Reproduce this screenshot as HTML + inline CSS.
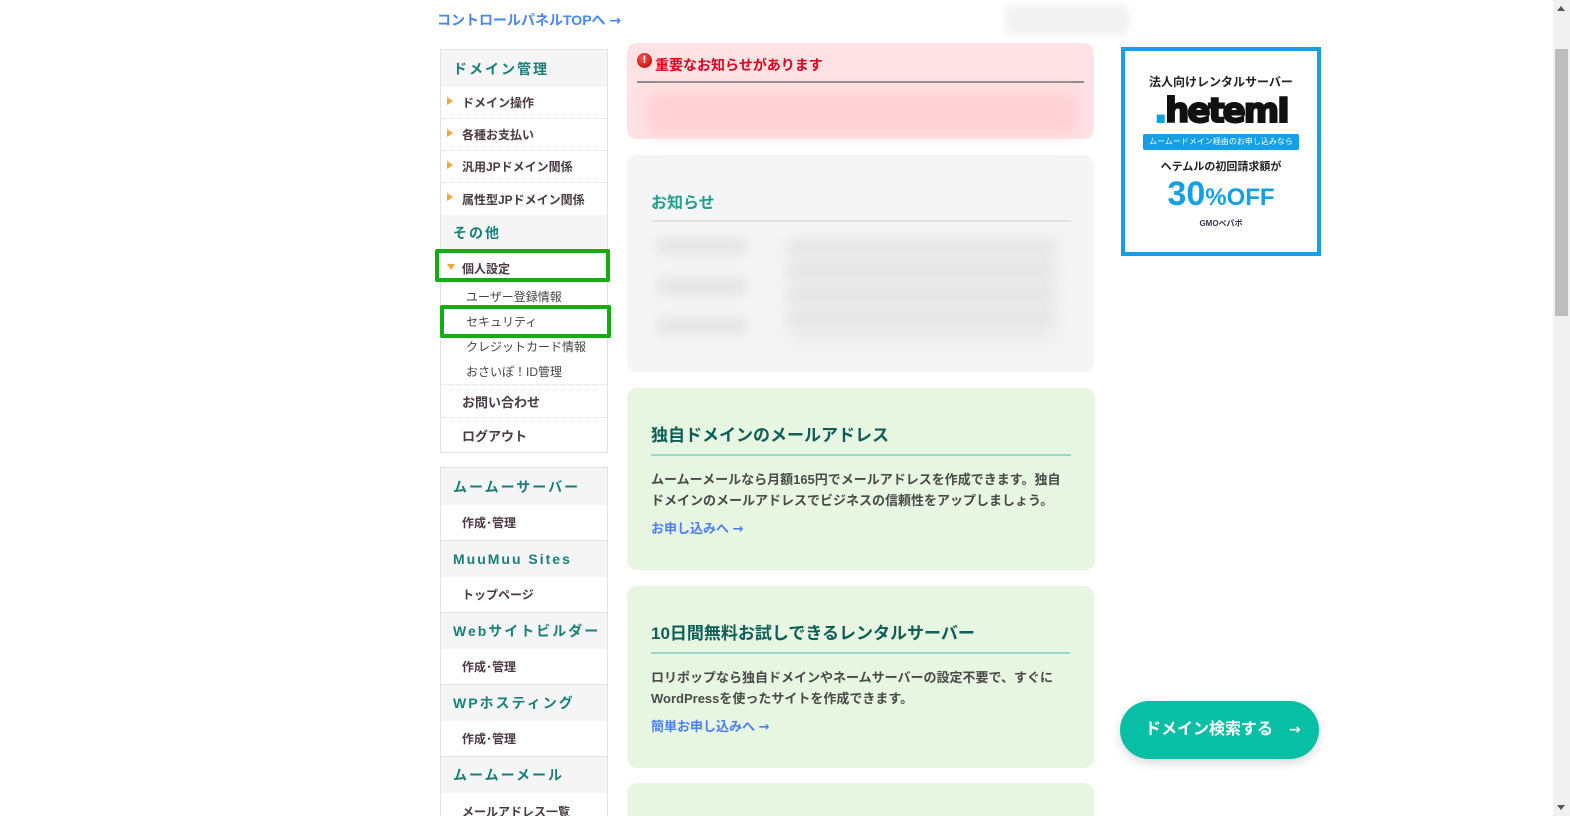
<!DOCTYPE html>
<html style="width:1570px;height:816px;overflow:hidden"><head><meta charset="utf-8"><style>
*{margin:0;padding:0;box-sizing:border-box}
body{width:1570px;height:816px;overflow:hidden;background:#fff;font-family:"Liberation Sans","Noto Sans CJK JP",sans-serif;position:relative;color:#444}
.a{position:absolute}
.side{left:440px;width:168px;border:1px solid #e3e3e3;border-top:1px solid #e3e3e3}
.hd{position:absolute;left:0;width:166px;background:#f5f5f5;color:#17807a;font-size:14px;font-weight:bold;letter-spacing:2px;padding-left:12px;display:flex;align-items:center}
.it{position:absolute;left:0;width:166px;font-size:12px;color:#4a3a44;font-weight:bold;padding-left:21px;display:flex;align-items:center;border-bottom:1px dotted #ddd}
.it.t:before{content:"";position:absolute;left:6px;top:50%;margin-top:-6px;border-left:6px solid #f5a33a;border-top:4px solid transparent;border-bottom:4px solid transparent}
.sub{position:absolute;left:25px;font-size:12px;color:#444}
.box{position:absolute;border-radius:10px}
.gh{position:absolute;left:24px;right:24px;font-size:17px;font-weight:bold;color:#0d5e58;border-bottom:2px solid #9dd6cf;padding-bottom:8px}
.gp{position:absolute;left:24px;right:24px;font-size:13px;line-height:21px;color:#4a4a4a;font-weight:bold}
.gl{position:absolute;left:24px;font-size:13px;color:#4b7ff5;font-weight:bold}
.grn{position:absolute;border:4px solid #12ad12;border-radius:2px}
.ar{font-family:"DejaVu Sans",sans-serif;font-weight:bold}
</style></head><body>
<div class="a" style="left:437px;top:10px;font-size:14px;color:#4a86f0;font-weight:bold">コントロールパネルTOPへ <span class="ar">→</span></div>
<div class="a" style="left:1005px;top:5px;width:125px;height:30px;background:#f2f2f2;filter:blur(4px);border-radius:8px"></div>

<div class="a side" style="top:49px;height:404px">
<div class="hd" style="top:0;height:37px">ドメイン管理</div>
<div class="it t" style="top:37px;height:32px">ドメイン操作</div>
<div class="it t" style="top:69px;height:32px">各種お支払い</div>
<div class="it t" style="top:101px;height:32px">汎用JPドメイン関係</div>
<div class="it t" style="top:133px;height:32px;border-bottom:none">属性型JPドメイン関係</div>
<div class="hd" style="top:165px;height:35px">その他</div>
<div class="it" style="top:203px;height:30px;border:none"><span style="position:absolute;left:6px;top:11px;border-top:6px solid #f5a33a;border-left:4px solid transparent;border-right:4px solid transparent"></span>個人設定</div>
<div class="sub" style="top:238px">ユーザー登録情報</div>
<div class="sub" style="top:263px">セキュリティ</div>
<div class="sub" style="top:288px">クレジットカード情報</div>
<div class="sub" style="top:313px">おさいぽ！ID管理</div>
<div class="it" style="top:334px;height:34px;border-top:1px dotted #ddd;font-size:13px">お問い合わせ</div>
<div class="it" style="top:368px;height:34px;border:none;font-size:13px">ログアウト</div>
</div>
<div class="grn" style="left:435px;top:249px;width:175px;height:33px"></div>
<div class="grn" style="left:440px;top:305px;width:171px;height:33px"></div>

<div class="a side" style="top:467px;height:360px">
<div class="hd" style="top:0;height:37px">ムームーサーバー</div>
<div class="it" style="top:37px;height:36px;border-bottom:1px solid #e3e3e3">作成･管理</div>
<div class="hd" style="top:73px;height:36px">MuuMuu Sites</div>
<div class="it" style="top:109px;height:36px;border-bottom:1px solid #e3e3e3">トップページ</div>
<div class="hd" style="top:145px;height:36px">Webサイトビルダー</div>
<div class="it" style="top:181px;height:36px;border-bottom:1px solid #e3e3e3">作成･管理</div>
<div class="hd" style="top:217px;height:36px">WPホスティング</div>
<div class="it" style="top:253px;height:36px;border-bottom:1px solid #e3e3e3">作成･管理</div>
<div class="hd" style="top:289px;height:36px">ムームーメール</div>
<div class="it" style="top:325px;height:36px;border:none">メールアドレス一覧</div>
</div>

<div class="box" style="left:627px;top:43px;width:467px;height:96px;background:#ffe2e4">
<div class="a" style="left:10px;top:10px;width:15px;height:15px;border-radius:50%;background:radial-gradient(circle at 40% 35%,#f55,#a00);color:#fff;font-size:11px;font-weight:bold;text-align:center;line-height:15px">!</div>
<div class="a" style="left:28px;top:12px;font-size:14px;color:#e0001a;font-weight:bold">重要なお知らせがあります</div>
<div class="a" style="left:10px;top:38px;width:447px;height:2px;background:#8e8a8a"></div>
<div class="a" style="left:20px;top:50px;width:430px;height:40px;background:#ffcfd3;filter:blur(8px)"></div>
</div>

<div class="box" style="left:627px;top:155px;width:467px;height:217px;background:#f5f5f5">
<div class="a" style="left:24px;top:34px;font-size:16px;color:#20a090;font-weight:bold">お知らせ</div>
<div class="a" style="left:24px;top:65px;width:420px;height:2px;background:#e3e3e3"></div>
<div class="a" style="left:30px;top:85px;width:90px;height:100px;background:repeating-linear-gradient(#e0e0e0 0 12px,#f3f3f3 12px 40px);filter:blur(6px)"></div>
<div class="a" style="left:160px;top:85px;width:270px;height:100px;background:repeating-linear-gradient(#e2e2e2 0 14px,#f0f0f0 14px 24px);filter:blur(7px)"></div>
</div>

<div class="box" style="left:627px;top:388px;width:468px;height:182px;background:#e7f6e1">
<div class="gh" style="top:33px">独自ドメインのメールアドレス</div>
<div class="gp" style="top:81px">ムームーメールなら月額165円でメールアドレスを作成できます。独自ドメインのメールアドレスでビジネスの信頼性をアップしましょう。</div>
<div class="gl" style="top:130px">お申し込みへ <span class="ar">→</span></div>
</div>
<div class="box" style="left:627px;top:586px;width:467px;height:182px;background:#e7f6e1">
<div class="gh" style="top:33px">10日間無料お試しできるレンタルサーバー</div>
<div class="gp" style="top:81px">ロリポップなら独自ドメインやネームサーバーの設定不要で、すぐにWordPressを使ったサイトを作成できます。</div>
<div class="gl" style="top:130px">簡単お申し込みへ <span class="ar">→</span></div>
</div>
<div class="box" style="left:627px;top:783px;width:467px;height:33px;background:#e7f6e1;border-radius:10px 10px 0 0"></div>

<div class="a" style="left:1121px;top:47px;width:200px;height:209px;border:4px solid #14a0e6;background:#fff;text-align:center">
<div style="margin-top:22px;font-size:12px;font-weight:bold;color:#222">法人向けレンタルサーバー</div>
<div style="margin:2px auto 0;font-size:34px;font-weight:900;color:#111;font-family:'DejaVu Sans',sans-serif;letter-spacing:-2px;line-height:38px;-webkit-text-stroke:2px #111"><span style="color:#14a0e6;-webkit-text-stroke:2px #14a0e6">.</span>hetemI</div>
<div style="margin:4px auto 0;width:156px;height:16px;background:#14a0e6;border-radius:2px;color:#fff;font-size:8px;line-height:16px">ムームードメイン経由のお申し込みなら</div>
<div style="margin-top:8px;font-size:11px;font-weight:bold;color:#222">ヘテムルの初回請求額が</div>
<div style="font-size:34px;font-weight:bold;color:#14a0e6;line-height:40px">30<span style="font-size:24px">%OFF</span></div>
<div style="font-size:8px;color:#335;font-weight:bold">GMOペパボ</div>
</div>

<div class="a" style="left:1120px;top:701px;width:199px;height:58px;border-radius:29px;background:#07bfa5;box-shadow:0 4px 10px rgba(0,0,0,.15);color:#fff;font-weight:bold;font-size:16px;line-height:58px;padding-left:25px">ドメイン検索する　<span class="ar" style="font-size:14px">→</span></div>

<div class="a" style="left:1553px;top:0;width:17px;height:816px;background:#f0f0f0"></div>
<div class="a" style="left:1555px;top:49px;width:13px;height:267px;background:#bdbdbd"></div>
<div class="a" style="left:1557px;top:6px;border-bottom:5px solid #555;border-left:4px solid transparent;border-right:4px solid transparent"></div>
<div class="a" style="left:1557px;top:805px;border-top:5px solid #555;border-left:4px solid transparent;border-right:4px solid transparent"></div>
</body></html>
